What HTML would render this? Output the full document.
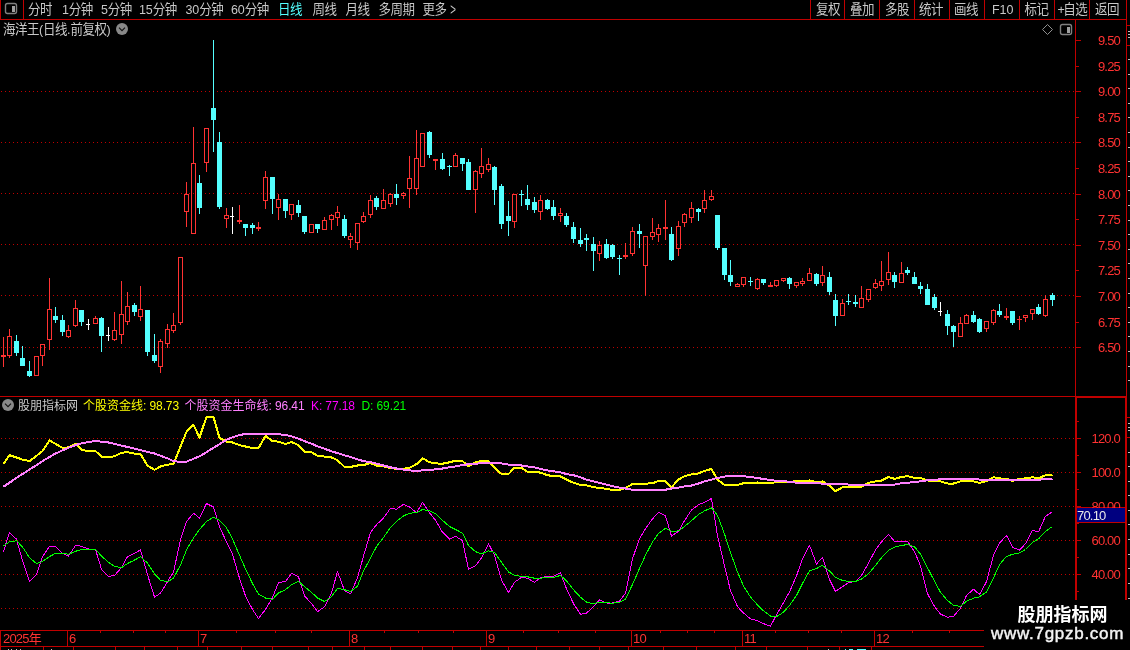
<!DOCTYPE html>
<html lang="zh-CN"><head><meta charset="utf-8"><title>海洋王 日线</title>
<style>
html,body{margin:0;padding:0;background:#000;}
body{width:1130px;height:650px;overflow:hidden;position:relative;}
svg{position:absolute;left:0;top:0;display:block;will-change:transform;}
text{font-family:"Liberation Sans","Noto Sans CJK SC",sans-serif;fill:#c8c8c8;}
.tb{font-size:12.5px;letter-spacing:-0.5px;}
.tl{font-size:12px;letter-spacing:0px;}
.la{letter-spacing:-0.1px;}
.tl .la{letter-spacing:-0.1px;}
.cy{fill:#54ffff;}
.ax{font-size:13px;fill:#ff3232;letter-spacing:-0.8px;}
.wm1{font-size:18px;font-weight:bold;fill:#fff;letter-spacing:0px;}
.wm2{font-size:17px;font-weight:normal;fill:#f4f4f4;stroke:#f4f4f4;stroke-width:0.45px;letter-spacing:0.72px;}
</style></head><body>
<svg width="1130" height="650" viewBox="0 0 1130 650" shape-rendering="crispEdges">
<rect x="0" y="0" width="1130" height="650" fill="#000"/>
<line x1="1" y1="91.5" x2="1075" y2="91.5" stroke="#c00000" stroke-width="1" stroke-dasharray="1 3"/>
<line x1="1" y1="142.5" x2="1075" y2="142.5" stroke="#c00000" stroke-width="1" stroke-dasharray="1 3"/>
<line x1="1" y1="193.5" x2="1075" y2="193.5" stroke="#c00000" stroke-width="1" stroke-dasharray="1 3"/>
<line x1="1" y1="244.5" x2="1075" y2="244.5" stroke="#c00000" stroke-width="1" stroke-dasharray="1 3"/>
<line x1="1" y1="295.5" x2="1075" y2="295.5" stroke="#c00000" stroke-width="1" stroke-dasharray="1 3"/>
<line x1="1" y1="347.5" x2="1075" y2="347.5" stroke="#c00000" stroke-width="1" stroke-dasharray="1 3"/>
<line x1="1" y1="438.5" x2="1075" y2="438.5" stroke="#c00000" stroke-width="1" stroke-dasharray="1 3"/>
<line x1="1" y1="472.5" x2="1075" y2="472.5" stroke="#c00000" stroke-width="1" stroke-dasharray="1 3"/>
<line x1="1" y1="506.5" x2="1075" y2="506.5" stroke="#c00000" stroke-width="1" stroke-dasharray="1 3"/>
<line x1="1" y1="540.5" x2="1075" y2="540.5" stroke="#c00000" stroke-width="1" stroke-dasharray="1 3"/>
<line x1="1" y1="574.5" x2="1075" y2="574.5" stroke="#c00000" stroke-width="1" stroke-dasharray="1 3"/>
<line x1="1" y1="608.5" x2="1075" y2="608.5" stroke="#c00000" stroke-width="1" stroke-dasharray="1 3"/>
<rect x="0" y="19" width="1127" height="1" fill="#c00000"/>
<rect x="0" y="0" width="1" height="20" fill="#c00000"/>
<rect x="23" y="0" width="1" height="20" fill="#c00000"/>
<rect x="810" y="0" width="1" height="20" fill="#c00000"/>
<rect x="844" y="0" width="1" height="20" fill="#c00000"/>
<rect x="879" y="0" width="1" height="20" fill="#c00000"/>
<rect x="914" y="0" width="1" height="20" fill="#c00000"/>
<rect x="949" y="0" width="1" height="20" fill="#c00000"/>
<rect x="984" y="0" width="1" height="20" fill="#c00000"/>
<rect x="1019" y="0" width="1" height="20" fill="#c00000"/>
<rect x="1054" y="0" width="1" height="20" fill="#c00000"/>
<rect x="1089" y="0" width="1" height="20" fill="#c00000"/>
<rect x="1126" y="0" width="1" height="397" fill="#c00000"/>
<rect x="1075" y="20" width="1" height="377" fill="#c00000"/>
<rect x="0" y="396" width="1075" height="1" fill="#c00000"/>
<rect x="1075" y="396" width="52" height="2" fill="#c00000"/>
<rect x="1075" y="396" width="2" height="235" fill="#c00000"/>
<rect x="1125" y="396" width="2" height="254" fill="#c00000"/>
<rect x="0" y="630" width="985" height="1" fill="#c00000"/>
<rect x="0" y="646" width="985" height="1" fill="#c00000"/>
<rect x="0" y="630" width="1" height="20" fill="#c00000"/>
<rect x="8" y="649" width="1" height="1" fill="#c0c0c0"/>
<rect x="11" y="649" width="1" height="1" fill="#c0c0c0"/>
<rect x="16" y="649" width="1" height="1" fill="#c0c0c0"/>
<rect x="20" y="649" width="1" height="1" fill="#c0c0c0"/>
<rect x="51" y="649" width="1" height="1" fill="#c0c0c0"/>
<rect x="828" y="649" width="1" height="1" fill="#c0c0c0"/>
<rect x="845" y="649" width="1" height="1" fill="#54ffff"/>
<rect x="849" y="649" width="4" height="1" fill="#54ffff"/>
<rect x="857" y="649" width="9" height="1" fill="#54ffff"/>
<rect x="1127" y="25" width="3" height="1" fill="#c00000"/>
<rect x="1127" y="45" width="3" height="1" fill="#c00000"/>
<rect x="1127" y="417" width="3" height="1" fill="#c00000"/>
<rect x="1127" y="437" width="3" height="1" fill="#c00000"/>
<rect x="1128" y="31" width="2" height="1" fill="#c0c0c0"/>
<rect x="1128" y="34" width="2" height="1" fill="#c0c0c0"/>
<rect x="1128" y="37" width="2" height="1" fill="#c0c0c0"/>
<rect x="1128" y="59" width="2" height="1" fill="#c0c0c0"/>
<rect x="1128" y="74" width="2" height="1" fill="#c0c0c0"/>
<rect x="1128" y="88" width="2" height="1" fill="#c0c0c0"/>
<rect x="1128" y="103" width="2" height="1" fill="#c0c0c0"/>
<rect x="1128" y="117" width="2" height="1" fill="#c0c0c0"/>
<rect x="1128" y="132" width="2" height="1" fill="#c0c0c0"/>
<rect x="1128" y="147" width="2" height="1" fill="#c0c0c0"/>
<rect x="1128" y="161" width="2" height="1" fill="#c0c0c0"/>
<rect x="1128" y="176" width="2" height="1" fill="#c0c0c0"/>
<rect x="1128" y="190" width="2" height="1" fill="#c0c0c0"/>
<rect x="1128" y="205" width="2" height="1" fill="#c0c0c0"/>
<rect x="1128" y="220" width="2" height="1" fill="#c0c0c0"/>
<rect x="1128" y="234" width="2" height="1" fill="#c0c0c0"/>
<rect x="1128" y="249" width="2" height="1" fill="#c0c0c0"/>
<rect x="1128" y="263" width="2" height="1" fill="#c0c0c0"/>
<rect x="1128" y="278" width="2" height="1" fill="#c0c0c0"/>
<rect x="1128" y="293" width="2" height="1" fill="#c0c0c0"/>
<rect x="1128" y="307" width="2" height="1" fill="#c0c0c0"/>
<rect x="1128" y="322" width="2" height="1" fill="#c0c0c0"/>
<rect x="1128" y="336" width="2" height="1" fill="#c0c0c0"/>
<rect x="1128" y="351" width="2" height="1" fill="#c0c0c0"/>
<rect x="1128" y="366" width="2" height="1" fill="#c0c0c0"/>
<rect x="1128" y="380" width="2" height="1" fill="#c0c0c0"/>
<rect x="1128" y="423" width="2" height="1" fill="#c0c0c0"/>
<rect x="1128" y="427" width="2" height="1" fill="#c0c0c0"/>
<rect x="1128" y="430" width="2" height="1" fill="#c0c0c0"/>
<rect x="1128" y="452" width="2" height="1" fill="#c0c0c0"/>
<rect x="1128" y="466" width="2" height="1" fill="#c0c0c0"/>
<rect x="1128" y="481" width="2" height="1" fill="#c0c0c0"/>
<rect x="1128" y="495" width="2" height="1" fill="#c0c0c0"/>
<rect x="1128" y="510" width="2" height="1" fill="#c0c0c0"/>
<rect x="1128" y="524" width="2" height="1" fill="#c0c0c0"/>
<rect x="1128" y="539" width="2" height="1" fill="#c0c0c0"/>
<rect x="1128" y="554" width="2" height="1" fill="#c0c0c0"/>
<rect x="1128" y="568" width="2" height="1" fill="#c0c0c0"/>
<rect x="1128" y="583" width="2" height="1" fill="#c0c0c0"/>
<rect x="1128" y="598" width="2" height="1" fill="#c0c0c0"/>
<rect x="67" y="630" width="1" height="17" fill="#c00000"/>
<rect x="198" y="630" width="1" height="17" fill="#c00000"/>
<rect x="349" y="630" width="1" height="17" fill="#c00000"/>
<rect x="486" y="630" width="1" height="17" fill="#c00000"/>
<rect x="631" y="630" width="1" height="17" fill="#c00000"/>
<rect x="742" y="630" width="1" height="17" fill="#c00000"/>
<rect x="874" y="630" width="1" height="17" fill="#c00000"/>
<rect x="100" y="630" width="1" height="3" fill="#c00000"/>
<rect x="133" y="630" width="1" height="3" fill="#c00000"/>
<rect x="165" y="630" width="1" height="3" fill="#c00000"/>
<rect x="236" y="630" width="1" height="3" fill="#c00000"/>
<rect x="275" y="630" width="1" height="3" fill="#c00000"/>
<rect x="311" y="630" width="1" height="3" fill="#c00000"/>
<rect x="384" y="630" width="1" height="3" fill="#c00000"/>
<rect x="418" y="630" width="1" height="3" fill="#c00000"/>
<rect x="453" y="630" width="1" height="3" fill="#c00000"/>
<rect x="523" y="630" width="1" height="3" fill="#c00000"/>
<rect x="558" y="630" width="1" height="3" fill="#c00000"/>
<rect x="595" y="630" width="1" height="3" fill="#c00000"/>
<rect x="660" y="630" width="1" height="3" fill="#c00000"/>
<rect x="687" y="630" width="1" height="3" fill="#c00000"/>
<rect x="714" y="630" width="1" height="3" fill="#c00000"/>
<rect x="775" y="630" width="1" height="3" fill="#c00000"/>
<rect x="808" y="630" width="1" height="3" fill="#c00000"/>
<rect x="841" y="630" width="1" height="3" fill="#c00000"/>
<rect x="912" y="630" width="1" height="3" fill="#c00000"/>
<rect x="949" y="630" width="1" height="3" fill="#c00000"/>
<rect x="43" y="646" width="1" height="4" fill="#c00000"/>
<rect x="73" y="646" width="1" height="4" fill="#c00000"/>
<rect x="115" y="646" width="1" height="4" fill="#c00000"/>
<rect x="144" y="646" width="1" height="4" fill="#c00000"/>
<rect x="177" y="646" width="1" height="4" fill="#c00000"/>
<rect x="207" y="646" width="1" height="4" fill="#c00000"/>
<rect x="241" y="646" width="1" height="4" fill="#c00000"/>
<rect x="272" y="646" width="1" height="4" fill="#c00000"/>
<rect x="308" y="646" width="1" height="4" fill="#c00000"/>
<rect x="332" y="646" width="1" height="4" fill="#c00000"/>
<rect x="364" y="646" width="1" height="4" fill="#c00000"/>
<rect x="390" y="646" width="1" height="4" fill="#c00000"/>
<rect x="422" y="646" width="1" height="4" fill="#c00000"/>
<rect x="452" y="646" width="1" height="4" fill="#c00000"/>
<rect x="480" y="646" width="1" height="4" fill="#c00000"/>
<rect x="508" y="646" width="1" height="4" fill="#c00000"/>
<rect x="536" y="646" width="1" height="4" fill="#c00000"/>
<rect x="569" y="646" width="1" height="4" fill="#c00000"/>
<rect x="599" y="646" width="1" height="4" fill="#c00000"/>
<rect x="628" y="646" width="1" height="4" fill="#c00000"/>
<rect x="663" y="646" width="1" height="4" fill="#c00000"/>
<rect x="696" y="646" width="1" height="4" fill="#c00000"/>
<rect x="735" y="646" width="1" height="4" fill="#c00000"/>
<rect x="766" y="646" width="1" height="4" fill="#c00000"/>
<rect x="807" y="646" width="1" height="4" fill="#c00000"/>
<rect x="839" y="646" width="1" height="4" fill="#c00000"/>
<rect x="871" y="646" width="1" height="4" fill="#c00000"/>
<rect x="1076" y="40" width="5" height="1" fill="#c00000"/>
<rect x="1076" y="66" width="3" height="1" fill="#c00000"/>
<rect x="1076" y="91" width="5" height="1" fill="#c00000"/>
<rect x="1076" y="117" width="3" height="1" fill="#c00000"/>
<rect x="1076" y="142" width="5" height="1" fill="#c00000"/>
<rect x="1076" y="168" width="3" height="1" fill="#c00000"/>
<rect x="1076" y="194" width="5" height="1" fill="#c00000"/>
<rect x="1076" y="219" width="3" height="1" fill="#c00000"/>
<rect x="1076" y="245" width="5" height="1" fill="#c00000"/>
<rect x="1076" y="270" width="3" height="1" fill="#c00000"/>
<rect x="1076" y="296" width="5" height="1" fill="#c00000"/>
<rect x="1076" y="322" width="3" height="1" fill="#c00000"/>
<rect x="1076" y="347" width="5" height="1" fill="#c00000"/>
<rect x="1077" y="438" width="4" height="1" fill="#c00000"/>
<rect x="1077" y="472" width="4" height="1" fill="#c00000"/>
<rect x="1077" y="506" width="4" height="1" fill="#c00000"/>
<rect x="1077" y="540" width="4" height="1" fill="#c00000"/>
<rect x="1077" y="574" width="4" height="1" fill="#c00000"/>
<rect x="1077" y="421" width="2" height="1" fill="#c00000"/>
<rect x="1077" y="455" width="2" height="1" fill="#c00000"/>
<rect x="1077" y="489" width="2" height="1" fill="#c00000"/>
<rect x="1077" y="523" width="2" height="1" fill="#c00000"/>
<rect x="1077" y="557" width="2" height="1" fill="#c00000"/>
<rect x="1077" y="591" width="2" height="1" fill="#c00000"/>
<rect x="1077" y="608" width="2" height="1" fill="#c00000"/>
<rect x="1077" y="625" width="2" height="1" fill="#c00000"/>
<rect x="3" y="337" width="1" height="30" fill="#ff3232"/>
<rect x="1" y="355" width="5" height="2" fill="#ff3232"/>
<rect x="9" y="329" width="1" height="7" fill="#ff3232"/>
<rect x="9" y="356" width="1" height="2" fill="#ff3232"/>
<rect x="7.5" y="336.5" width="4" height="19" fill="none" stroke="#ff3232" stroke-width="1"/>
<rect x="16" y="335" width="1" height="21" fill="#54ffff"/>
<rect x="14" y="341" width="5" height="12" fill="#54ffff"/>
<rect x="22" y="346" width="1" height="20" fill="#54ffff"/>
<rect x="20" y="358" width="5" height="8" fill="#54ffff"/>
<rect x="29" y="361" width="1" height="16" fill="#54ffff"/>
<rect x="27" y="371" width="5" height="5" fill="#54ffff"/>
<rect x="34.5" y="356.5" width="4" height="19" fill="none" stroke="#ff3232" stroke-width="1"/>
<rect x="42" y="356" width="1" height="10" fill="#ff3232"/>
<rect x="40.5" y="344.5" width="4" height="11" fill="none" stroke="#ff3232" stroke-width="1"/>
<rect x="49" y="278" width="1" height="31" fill="#ff3232"/>
<rect x="49" y="340" width="1" height="10" fill="#ff3232"/>
<rect x="47.5" y="309.5" width="4" height="30" fill="none" stroke="#ff3232" stroke-width="1"/>
<rect x="55" y="307" width="1" height="16" fill="#54ffff"/>
<rect x="53" y="316" width="5" height="4" fill="#54ffff"/>
<rect x="62" y="315" width="1" height="21" fill="#54ffff"/>
<rect x="60" y="320" width="5" height="12" fill="#54ffff"/>
<rect x="68" y="325" width="1" height="5" fill="#ff3232"/>
<rect x="68" y="337" width="1" height="1" fill="#ff3232"/>
<rect x="66.5" y="330.5" width="4" height="6" fill="none" stroke="#ff3232" stroke-width="1"/>
<rect x="75" y="300" width="1" height="8" fill="#ff3232"/>
<rect x="75" y="326" width="1" height="1" fill="#ff3232"/>
<rect x="73.5" y="308.5" width="4" height="17" fill="none" stroke="#ff3232" stroke-width="1"/>
<rect x="81" y="310" width="1" height="16" fill="#54ffff"/>
<rect x="79" y="310" width="5" height="12" fill="#54ffff"/>
<rect x="88" y="319" width="1" height="11" fill="#ffffff"/>
<rect x="86" y="324" width="4" height="1" fill="#ffffff"/>
<rect x="95" y="316" width="1" height="2" fill="#ff3232"/>
<rect x="93.5" y="318.5" width="4" height="5" fill="none" stroke="#ff3232" stroke-width="1"/>
<rect x="101" y="317" width="1" height="35" fill="#54ffff"/>
<rect x="99" y="318" width="5" height="18" fill="#54ffff"/>
<rect x="108" y="327" width="1" height="14" fill="#ffffff"/>
<rect x="106" y="335" width="4" height="1" fill="#ffffff"/>
<rect x="114" y="312" width="1" height="18" fill="#ff3232"/>
<rect x="114" y="340" width="1" height="1" fill="#ff3232"/>
<rect x="112.5" y="330.5" width="4" height="9" fill="none" stroke="#ff3232" stroke-width="1"/>
<rect x="121" y="281" width="1" height="33" fill="#ff3232"/>
<rect x="121" y="335" width="1" height="9" fill="#ff3232"/>
<rect x="119.5" y="314.5" width="4" height="20" fill="none" stroke="#ff3232" stroke-width="1"/>
<rect x="127" y="292" width="1" height="14" fill="#ff3232"/>
<rect x="127" y="322" width="1" height="3" fill="#ff3232"/>
<rect x="125.5" y="306.5" width="4" height="15" fill="none" stroke="#ff3232" stroke-width="1"/>
<rect x="134" y="303" width="1" height="13" fill="#54ffff"/>
<rect x="132" y="305" width="5" height="7" fill="#54ffff"/>
<rect x="140" y="286" width="1" height="23" fill="#ff3232"/>
<rect x="140" y="317" width="1" height="4" fill="#ff3232"/>
<rect x="138.5" y="309.5" width="4" height="7" fill="none" stroke="#ff3232" stroke-width="1"/>
<rect x="147" y="310" width="1" height="46" fill="#54ffff"/>
<rect x="145" y="310" width="5" height="42" fill="#54ffff"/>
<rect x="154" y="334" width="1" height="29" fill="#54ffff"/>
<rect x="152" y="355" width="5" height="6" fill="#54ffff"/>
<rect x="160" y="339" width="1" height="2" fill="#ff3232"/>
<rect x="160" y="367" width="1" height="6" fill="#ff3232"/>
<rect x="158.5" y="341.5" width="4" height="25" fill="none" stroke="#ff3232" stroke-width="1"/>
<rect x="167" y="324" width="1" height="5" fill="#ff3232"/>
<rect x="167" y="344" width="1" height="4" fill="#ff3232"/>
<rect x="165.5" y="329.5" width="4" height="14" fill="none" stroke="#ff3232" stroke-width="1"/>
<rect x="173" y="313" width="1" height="12" fill="#ff3232"/>
<rect x="173" y="331" width="1" height="2" fill="#ff3232"/>
<rect x="171.5" y="325.5" width="4" height="5" fill="none" stroke="#ff3232" stroke-width="1"/>
<rect x="180" y="323" width="1" height="2" fill="#ff3232"/>
<rect x="178.5" y="257.5" width="4" height="65" fill="none" stroke="#ff3232" stroke-width="1"/>
<rect x="186" y="182" width="1" height="12" fill="#ff3232"/>
<rect x="186" y="212" width="1" height="15" fill="#ff3232"/>
<rect x="184.5" y="194.5" width="4" height="17" fill="none" stroke="#ff3232" stroke-width="1"/>
<rect x="193" y="127" width="1" height="36" fill="#ff3232"/>
<rect x="191.5" y="163.5" width="4" height="70" fill="none" stroke="#ff3232" stroke-width="1"/>
<rect x="199" y="175" width="1" height="39" fill="#54ffff"/>
<rect x="197" y="183" width="5" height="25" fill="#54ffff"/>
<rect x="206" y="163" width="1" height="9" fill="#ff3232"/>
<rect x="204.5" y="128.5" width="4" height="34" fill="none" stroke="#ff3232" stroke-width="1"/>
<rect x="213" y="40" width="1" height="112" fill="#54ffff"/>
<rect x="211" y="108" width="5" height="12" fill="#54ffff"/>
<rect x="219" y="132" width="1" height="77" fill="#54ffff"/>
<rect x="217" y="142" width="5" height="65" fill="#54ffff"/>
<rect x="226" y="208" width="1" height="7" fill="#ff3232"/>
<rect x="226" y="219" width="1" height="9" fill="#ff3232"/>
<rect x="224.5" y="215.5" width="4" height="3" fill="none" stroke="#ff3232" stroke-width="1"/>
<rect x="232" y="207" width="1" height="27" fill="#ffffff"/>
<rect x="230" y="216" width="4" height="1" fill="#ffffff"/>
<rect x="239" y="205" width="1" height="19" fill="#ff3232"/>
<rect x="237" y="220" width="5" height="2" fill="#ff3232"/>
<rect x="245" y="224" width="1" height="12" fill="#54ffff"/>
<rect x="243" y="224" width="5" height="4" fill="#54ffff"/>
<rect x="252" y="223" width="1" height="11" fill="#54ffff"/>
<rect x="250" y="225" width="5" height="3" fill="#54ffff"/>
<rect x="258" y="222" width="1" height="9" fill="#ff3232"/>
<rect x="256" y="227" width="5" height="2" fill="#ff3232"/>
<rect x="265" y="171" width="1" height="6" fill="#ff3232"/>
<rect x="265" y="201" width="1" height="8" fill="#ff3232"/>
<rect x="263.5" y="177.5" width="4" height="23" fill="none" stroke="#ff3232" stroke-width="1"/>
<rect x="272" y="177" width="1" height="37" fill="#54ffff"/>
<rect x="270" y="177" width="5" height="22" fill="#54ffff"/>
<rect x="278" y="194" width="1" height="5" fill="#ff3232"/>
<rect x="278" y="208" width="1" height="12" fill="#ff3232"/>
<rect x="276.5" y="199.5" width="4" height="8" fill="none" stroke="#ff3232" stroke-width="1"/>
<rect x="285" y="199" width="1" height="19" fill="#54ffff"/>
<rect x="283" y="199" width="5" height="12" fill="#54ffff"/>
<rect x="291" y="215" width="1" height="5" fill="#ff3232"/>
<rect x="289.5" y="204.5" width="4" height="10" fill="none" stroke="#ff3232" stroke-width="1"/>
<rect x="298" y="200" width="1" height="17" fill="#54ffff"/>
<rect x="296" y="205" width="5" height="8" fill="#54ffff"/>
<rect x="304" y="216" width="1" height="18" fill="#54ffff"/>
<rect x="302" y="216" width="5" height="16" fill="#54ffff"/>
<rect x="309.5" y="224.5" width="4" height="8" fill="none" stroke="#ff3232" stroke-width="1"/>
<rect x="317" y="224" width="1" height="9" fill="#54ffff"/>
<rect x="315" y="224" width="5" height="5" fill="#54ffff"/>
<rect x="324" y="217" width="1" height="3" fill="#ff3232"/>
<rect x="322.5" y="220.5" width="4" height="9" fill="none" stroke="#ff3232" stroke-width="1"/>
<rect x="331" y="214" width="1" height="1" fill="#ff3232"/>
<rect x="331" y="220" width="1" height="10" fill="#ff3232"/>
<rect x="329.5" y="215.5" width="4" height="4" fill="none" stroke="#ff3232" stroke-width="1"/>
<rect x="337" y="206" width="1" height="6" fill="#ff3232"/>
<rect x="337" y="218" width="1" height="8" fill="#ff3232"/>
<rect x="335.5" y="212.5" width="4" height="5" fill="none" stroke="#ff3232" stroke-width="1"/>
<rect x="344" y="215" width="1" height="23" fill="#54ffff"/>
<rect x="342" y="219" width="5" height="17" fill="#54ffff"/>
<rect x="350" y="233" width="1" height="3" fill="#ff3232"/>
<rect x="350" y="240" width="1" height="8" fill="#ff3232"/>
<rect x="348.5" y="236.5" width="4" height="3" fill="none" stroke="#ff3232" stroke-width="1"/>
<rect x="357" y="243" width="1" height="7" fill="#ff3232"/>
<rect x="355.5" y="223.5" width="4" height="19" fill="none" stroke="#ff3232" stroke-width="1"/>
<rect x="363" y="212" width="1" height="4" fill="#ff3232"/>
<rect x="363" y="222" width="1" height="1" fill="#ff3232"/>
<rect x="361.5" y="216.5" width="4" height="5" fill="none" stroke="#ff3232" stroke-width="1"/>
<rect x="370" y="195" width="1" height="5" fill="#ff3232"/>
<rect x="370" y="215" width="1" height="3" fill="#ff3232"/>
<rect x="368.5" y="200.5" width="4" height="14" fill="none" stroke="#ff3232" stroke-width="1"/>
<rect x="376" y="196" width="1" height="14" fill="#54ffff"/>
<rect x="374" y="198" width="5" height="9" fill="#54ffff"/>
<rect x="383" y="189" width="1" height="11" fill="#ff3232"/>
<rect x="381.5" y="200.5" width="4" height="8" fill="none" stroke="#ff3232" stroke-width="1"/>
<rect x="390" y="193" width="1" height="1" fill="#ff3232"/>
<rect x="390" y="204" width="1" height="3" fill="#ff3232"/>
<rect x="388.5" y="194.5" width="4" height="9" fill="none" stroke="#ff3232" stroke-width="1"/>
<rect x="396" y="184" width="1" height="21" fill="#54ffff"/>
<rect x="394" y="194" width="5" height="4" fill="#54ffff"/>
<rect x="403" y="192" width="1" height="1" fill="#ff3232"/>
<rect x="403" y="196" width="1" height="3" fill="#ff3232"/>
<rect x="401.5" y="193.5" width="4" height="2" fill="none" stroke="#ff3232" stroke-width="1"/>
<rect x="409" y="156" width="1" height="22" fill="#ff3232"/>
<rect x="409" y="189" width="1" height="19" fill="#ff3232"/>
<rect x="407.5" y="178.5" width="4" height="10" fill="none" stroke="#ff3232" stroke-width="1"/>
<rect x="416" y="130" width="1" height="28" fill="#ff3232"/>
<rect x="416" y="189" width="1" height="6" fill="#ff3232"/>
<rect x="414.5" y="158.5" width="4" height="30" fill="none" stroke="#ff3232" stroke-width="1"/>
<rect x="420.5" y="133.5" width="4" height="33" fill="none" stroke="#ff3232" stroke-width="1"/>
<rect x="429" y="131" width="1" height="27" fill="#54ffff"/>
<rect x="427" y="132" width="5" height="23" fill="#54ffff"/>
<rect x="435" y="159" width="1" height="11" fill="#ff3232"/>
<rect x="433" y="159" width="5" height="2" fill="#ff3232"/>
<rect x="442" y="153" width="1" height="17" fill="#54ffff"/>
<rect x="440" y="159" width="5" height="10" fill="#54ffff"/>
<rect x="449" y="165" width="1" height="11" fill="#54ffff"/>
<rect x="447" y="166" width="5" height="1" fill="#54ffff"/>
<rect x="455" y="153" width="1" height="2" fill="#ff3232"/>
<rect x="453.5" y="155.5" width="4" height="11" fill="none" stroke="#ff3232" stroke-width="1"/>
<rect x="462" y="158" width="1" height="13" fill="#54ffff"/>
<rect x="460" y="158" width="5" height="6" fill="#54ffff"/>
<rect x="468" y="159" width="1" height="31" fill="#54ffff"/>
<rect x="466" y="162" width="5" height="28" fill="#54ffff"/>
<rect x="475" y="170" width="1" height="1" fill="#ff3232"/>
<rect x="475" y="190" width="1" height="23" fill="#ff3232"/>
<rect x="473.5" y="171.5" width="4" height="18" fill="none" stroke="#ff3232" stroke-width="1"/>
<rect x="481" y="148" width="1" height="18" fill="#ff3232"/>
<rect x="481" y="174" width="1" height="4" fill="#ff3232"/>
<rect x="479.5" y="166.5" width="4" height="7" fill="none" stroke="#ff3232" stroke-width="1"/>
<rect x="488" y="158" width="1" height="6" fill="#ff3232"/>
<rect x="488" y="170" width="1" height="2" fill="#ff3232"/>
<rect x="486.5" y="164.5" width="4" height="5" fill="none" stroke="#ff3232" stroke-width="1"/>
<rect x="494" y="166" width="1" height="39" fill="#54ffff"/>
<rect x="492" y="167" width="5" height="23" fill="#54ffff"/>
<rect x="501" y="184" width="1" height="45" fill="#54ffff"/>
<rect x="499" y="186" width="5" height="38" fill="#54ffff"/>
<rect x="508" y="201" width="1" height="35" fill="#54ffff"/>
<rect x="506" y="216" width="5" height="5" fill="#54ffff"/>
<rect x="514" y="222" width="1" height="6" fill="#ff3232"/>
<rect x="512.5" y="194.5" width="4" height="27" fill="none" stroke="#ff3232" stroke-width="1"/>
<rect x="521" y="190" width="1" height="16" fill="#54ffff"/>
<rect x="519" y="194" width="5" height="1" fill="#54ffff"/>
<rect x="527" y="185" width="1" height="25" fill="#54ffff"/>
<rect x="525" y="199" width="5" height="6" fill="#54ffff"/>
<rect x="534" y="197" width="1" height="16" fill="#54ffff"/>
<rect x="532" y="202" width="5" height="8" fill="#54ffff"/>
<rect x="540" y="195" width="1" height="5" fill="#ff3232"/>
<rect x="540" y="212" width="1" height="8" fill="#ff3232"/>
<rect x="538.5" y="200.5" width="4" height="11" fill="none" stroke="#ff3232" stroke-width="1"/>
<rect x="547" y="199" width="1" height="11" fill="#54ffff"/>
<rect x="545" y="200" width="5" height="9" fill="#54ffff"/>
<rect x="553" y="200" width="1" height="20" fill="#54ffff"/>
<rect x="551" y="207" width="5" height="9" fill="#54ffff"/>
<rect x="560" y="208" width="1" height="5" fill="#ff3232"/>
<rect x="560" y="216" width="1" height="6" fill="#ff3232"/>
<rect x="558.5" y="213.5" width="4" height="2" fill="none" stroke="#ff3232" stroke-width="1"/>
<rect x="566" y="213" width="1" height="14" fill="#54ffff"/>
<rect x="564" y="216" width="5" height="9" fill="#54ffff"/>
<rect x="573" y="222" width="1" height="21" fill="#54ffff"/>
<rect x="571" y="227" width="5" height="12" fill="#54ffff"/>
<rect x="580" y="228" width="1" height="19" fill="#54ffff"/>
<rect x="578" y="240" width="5" height="4" fill="#54ffff"/>
<rect x="586" y="234" width="1" height="17" fill="#54ffff"/>
<rect x="584" y="238" width="5" height="2" fill="#54ffff"/>
<rect x="593" y="237" width="1" height="34" fill="#54ffff"/>
<rect x="591" y="244" width="5" height="7" fill="#54ffff"/>
<rect x="599" y="241" width="1" height="4" fill="#ff3232"/>
<rect x="599" y="254" width="1" height="7" fill="#ff3232"/>
<rect x="597.5" y="245.5" width="4" height="8" fill="none" stroke="#ff3232" stroke-width="1"/>
<rect x="606" y="239" width="1" height="20" fill="#54ffff"/>
<rect x="604" y="244" width="5" height="14" fill="#54ffff"/>
<rect x="612" y="244" width="1" height="15" fill="#54ffff"/>
<rect x="610" y="245" width="5" height="12" fill="#54ffff"/>
<rect x="619" y="255" width="1" height="20" fill="#54ffff"/>
<rect x="617" y="258" width="5" height="1" fill="#54ffff"/>
<rect x="625" y="243" width="1" height="16" fill="#ff3232"/>
<rect x="623" y="255" width="5" height="2" fill="#ff3232"/>
<rect x="632" y="227" width="1" height="4" fill="#ff3232"/>
<rect x="632" y="254" width="1" height="2" fill="#ff3232"/>
<rect x="630.5" y="231.5" width="4" height="22" fill="none" stroke="#ff3232" stroke-width="1"/>
<rect x="639" y="224" width="1" height="24" fill="#54ffff"/>
<rect x="637" y="231" width="5" height="3" fill="#54ffff"/>
<rect x="645" y="266" width="1" height="30" fill="#ff3232"/>
<rect x="643.5" y="236.5" width="4" height="29" fill="none" stroke="#ff3232" stroke-width="1"/>
<rect x="652" y="218" width="1" height="14" fill="#ff3232"/>
<rect x="652" y="237" width="1" height="3" fill="#ff3232"/>
<rect x="650.5" y="232.5" width="4" height="4" fill="none" stroke="#ff3232" stroke-width="1"/>
<rect x="658" y="224" width="1" height="4" fill="#ff3232"/>
<rect x="658" y="235" width="1" height="7" fill="#ff3232"/>
<rect x="656.5" y="228.5" width="4" height="6" fill="none" stroke="#ff3232" stroke-width="1"/>
<rect x="665" y="200" width="1" height="40" fill="#ff3232"/>
<rect x="663" y="227" width="5" height="2" fill="#ff3232"/>
<rect x="671" y="227" width="1" height="34" fill="#54ffff"/>
<rect x="669" y="234" width="5" height="26" fill="#54ffff"/>
<rect x="678" y="221" width="1" height="5" fill="#ff3232"/>
<rect x="678" y="249" width="1" height="7" fill="#ff3232"/>
<rect x="676.5" y="226.5" width="4" height="22" fill="none" stroke="#ff3232" stroke-width="1"/>
<rect x="684" y="213" width="1" height="1" fill="#ff3232"/>
<rect x="684" y="223" width="1" height="4" fill="#ff3232"/>
<rect x="682.5" y="214.5" width="4" height="8" fill="none" stroke="#ff3232" stroke-width="1"/>
<rect x="691" y="202" width="1" height="6" fill="#ff3232"/>
<rect x="691" y="218" width="1" height="5" fill="#ff3232"/>
<rect x="689.5" y="208.5" width="4" height="9" fill="none" stroke="#ff3232" stroke-width="1"/>
<rect x="698" y="208" width="1" height="13" fill="#54ffff"/>
<rect x="696" y="209" width="5" height="3" fill="#54ffff"/>
<rect x="704" y="190" width="1" height="10" fill="#ff3232"/>
<rect x="704" y="209" width="1" height="4" fill="#ff3232"/>
<rect x="702.5" y="200.5" width="4" height="8" fill="none" stroke="#ff3232" stroke-width="1"/>
<rect x="711" y="190" width="1" height="6" fill="#ff3232"/>
<rect x="711" y="200" width="1" height="1" fill="#ff3232"/>
<rect x="709.5" y="196.5" width="4" height="3" fill="none" stroke="#ff3232" stroke-width="1"/>
<rect x="717" y="215" width="1" height="35" fill="#54ffff"/>
<rect x="715" y="215" width="5" height="33" fill="#54ffff"/>
<rect x="724" y="248" width="1" height="32" fill="#54ffff"/>
<rect x="722" y="248" width="5" height="27" fill="#54ffff"/>
<rect x="730" y="260" width="1" height="26" fill="#54ffff"/>
<rect x="728" y="275" width="5" height="7" fill="#54ffff"/>
<rect x="737" y="283" width="1" height="1" fill="#ff3232"/>
<rect x="735.5" y="284.5" width="4" height="2" fill="none" stroke="#ff3232" stroke-width="1"/>
<rect x="743" y="285" width="1" height="2" fill="#ff3232"/>
<rect x="741.5" y="277.5" width="4" height="7" fill="none" stroke="#ff3232" stroke-width="1"/>
<rect x="750" y="277" width="1" height="9" fill="#54ffff"/>
<rect x="748" y="281" width="5" height="1" fill="#54ffff"/>
<rect x="757" y="278" width="1" height="1" fill="#ff3232"/>
<rect x="757" y="289" width="1" height="1" fill="#ff3232"/>
<rect x="755.5" y="279.5" width="4" height="9" fill="none" stroke="#ff3232" stroke-width="1"/>
<rect x="763" y="279" width="1" height="6" fill="#54ffff"/>
<rect x="761" y="279" width="5" height="4" fill="#54ffff"/>
<rect x="770" y="282" width="1" height="5" fill="#ff3232"/>
<rect x="768" y="285" width="5" height="2" fill="#ff3232"/>
<rect x="776" y="286" width="1" height="1" fill="#ff3232"/>
<rect x="774.5" y="280.5" width="4" height="5" fill="none" stroke="#ff3232" stroke-width="1"/>
<rect x="783" y="281" width="1" height="1" fill="#ff3232"/>
<rect x="781.5" y="278.5" width="4" height="2" fill="none" stroke="#ff3232" stroke-width="1"/>
<rect x="789" y="277" width="1" height="12" fill="#54ffff"/>
<rect x="787" y="278" width="5" height="6" fill="#54ffff"/>
<rect x="796" y="286" width="1" height="2" fill="#ff3232"/>
<rect x="794.5" y="282.5" width="4" height="3" fill="none" stroke="#ff3232" stroke-width="1"/>
<rect x="802" y="278" width="1" height="3" fill="#ff3232"/>
<rect x="802" y="284" width="1" height="2" fill="#ff3232"/>
<rect x="800.5" y="281.5" width="4" height="2" fill="none" stroke="#ff3232" stroke-width="1"/>
<rect x="809" y="268" width="1" height="5" fill="#ff3232"/>
<rect x="807.5" y="273.5" width="4" height="7" fill="none" stroke="#ff3232" stroke-width="1"/>
<rect x="816" y="273" width="1" height="13" fill="#54ffff"/>
<rect x="814" y="274" width="5" height="10" fill="#54ffff"/>
<rect x="822" y="266" width="1" height="9" fill="#ff3232"/>
<rect x="822" y="283" width="1" height="3" fill="#ff3232"/>
<rect x="820.5" y="275.5" width="4" height="7" fill="none" stroke="#ff3232" stroke-width="1"/>
<rect x="829" y="272" width="1" height="23" fill="#54ffff"/>
<rect x="827" y="277" width="5" height="15" fill="#54ffff"/>
<rect x="835" y="294" width="1" height="32" fill="#54ffff"/>
<rect x="833" y="300" width="5" height="16" fill="#54ffff"/>
<rect x="842" y="299" width="1" height="4" fill="#ff3232"/>
<rect x="840.5" y="303.5" width="4" height="12" fill="none" stroke="#ff3232" stroke-width="1"/>
<rect x="848" y="294" width="1" height="11" fill="#54ffff"/>
<rect x="846" y="301" width="5" height="1" fill="#54ffff"/>
<rect x="855" y="295" width="1" height="12" fill="#54ffff"/>
<rect x="853" y="302" width="5" height="2" fill="#54ffff"/>
<rect x="861" y="286" width="1" height="12" fill="#ff3232"/>
<rect x="859.5" y="298.5" width="4" height="9" fill="none" stroke="#ff3232" stroke-width="1"/>
<rect x="868" y="300" width="1" height="2" fill="#ff3232"/>
<rect x="866.5" y="289.5" width="4" height="10" fill="none" stroke="#ff3232" stroke-width="1"/>
<rect x="875" y="279" width="1" height="4" fill="#ff3232"/>
<rect x="875" y="288" width="1" height="1" fill="#ff3232"/>
<rect x="873.5" y="283.5" width="4" height="4" fill="none" stroke="#ff3232" stroke-width="1"/>
<rect x="881" y="261" width="1" height="20" fill="#ff3232"/>
<rect x="881" y="286" width="1" height="5" fill="#ff3232"/>
<rect x="879.5" y="281.5" width="4" height="4" fill="none" stroke="#ff3232" stroke-width="1"/>
<rect x="888" y="252" width="1" height="20" fill="#ff3232"/>
<rect x="888" y="280" width="1" height="5" fill="#ff3232"/>
<rect x="886.5" y="272.5" width="4" height="7" fill="none" stroke="#ff3232" stroke-width="1"/>
<rect x="894" y="272" width="1" height="16" fill="#54ffff"/>
<rect x="892" y="275" width="5" height="7" fill="#54ffff"/>
<rect x="901" y="262" width="1" height="11" fill="#ff3232"/>
<rect x="899.5" y="273.5" width="4" height="9" fill="none" stroke="#ff3232" stroke-width="1"/>
<rect x="907" y="267" width="1" height="8" fill="#54ffff"/>
<rect x="905" y="270" width="5" height="3" fill="#54ffff"/>
<rect x="914" y="272" width="1" height="12" fill="#54ffff"/>
<rect x="912" y="277" width="5" height="7" fill="#54ffff"/>
<rect x="920" y="282" width="1" height="12" fill="#54ffff"/>
<rect x="918" y="286" width="5" height="3" fill="#54ffff"/>
<rect x="927" y="284" width="1" height="21" fill="#54ffff"/>
<rect x="925" y="289" width="5" height="16" fill="#54ffff"/>
<rect x="934" y="294" width="1" height="16" fill="#54ffff"/>
<rect x="932" y="297" width="5" height="11" fill="#54ffff"/>
<rect x="940" y="302" width="1" height="14" fill="#ffffff"/>
<rect x="938" y="311" width="4" height="1" fill="#ffffff"/>
<rect x="947" y="310" width="1" height="25" fill="#54ffff"/>
<rect x="945" y="314" width="5" height="12" fill="#54ffff"/>
<rect x="953" y="325" width="1" height="22" fill="#54ffff"/>
<rect x="951" y="326" width="5" height="6" fill="#54ffff"/>
<rect x="960" y="317" width="1" height="6" fill="#ff3232"/>
<rect x="958.5" y="323.5" width="4" height="13" fill="none" stroke="#ff3232" stroke-width="1"/>
<rect x="966" y="314" width="1" height="1" fill="#ff3232"/>
<rect x="964.5" y="315.5" width="4" height="8" fill="none" stroke="#ff3232" stroke-width="1"/>
<rect x="973" y="311" width="1" height="12" fill="#54ffff"/>
<rect x="971" y="315" width="5" height="7" fill="#54ffff"/>
<rect x="979" y="318" width="1" height="15" fill="#54ffff"/>
<rect x="977" y="319" width="5" height="13" fill="#54ffff"/>
<rect x="986" y="329" width="1" height="3" fill="#ff3232"/>
<rect x="984.5" y="321.5" width="4" height="7" fill="none" stroke="#ff3232" stroke-width="1"/>
<rect x="993" y="309" width="1" height="1" fill="#ff3232"/>
<rect x="993" y="323" width="1" height="2" fill="#ff3232"/>
<rect x="991.5" y="310.5" width="4" height="12" fill="none" stroke="#ff3232" stroke-width="1"/>
<rect x="999" y="304" width="1" height="13" fill="#54ffff"/>
<rect x="997" y="311" width="5" height="4" fill="#54ffff"/>
<rect x="1006" y="308" width="1" height="12" fill="#ff3232"/>
<rect x="1004" y="316" width="5" height="2" fill="#ff3232"/>
<rect x="1012" y="311" width="1" height="14" fill="#54ffff"/>
<rect x="1010" y="311" width="5" height="12" fill="#54ffff"/>
<rect x="1019" y="316" width="1" height="3" fill="#ff3232"/>
<rect x="1019" y="320" width="1" height="10" fill="#ff3232"/>
<rect x="1017" y="319" width="5" height="1" fill="#ff3232"/>
<rect x="1025" y="318" width="1" height="4" fill="#ff3232"/>
<rect x="1023.5" y="315.5" width="4" height="2" fill="none" stroke="#ff3232" stroke-width="1"/>
<rect x="1032" y="314" width="1" height="6" fill="#ff3232"/>
<rect x="1030.5" y="309.5" width="4" height="4" fill="none" stroke="#ff3232" stroke-width="1"/>
<rect x="1038" y="304" width="1" height="11" fill="#54ffff"/>
<rect x="1036" y="307" width="5" height="7" fill="#54ffff"/>
<rect x="1045" y="295" width="1" height="4" fill="#ff3232"/>
<rect x="1045" y="316" width="1" height="1" fill="#ff3232"/>
<rect x="1043.5" y="299.5" width="4" height="16" fill="none" stroke="#ff3232" stroke-width="1"/>
<rect x="1052" y="293" width="1" height="13" fill="#54ffff"/>
<rect x="1050" y="295" width="5" height="5" fill="#54ffff"/>
<polyline points="3.5,464.1 9.5,455.2 16.5,457.5 22.5,459.6 29.5,461.1 36.5,455.8 42.5,451.0 49.5,440.4 55.5,443.9 62.5,447.8 68.5,447.4 75.5,443.9 81.5,449.9 88.5,451.0 95.5,451.0 101.5,456.6 108.5,457.0 114.5,456.3 121.5,452.7 127.5,452.2 134.5,453.6 140.5,454.0 147.5,465.5 154.5,469.9 160.5,466.4 167.5,464.6 173.5,464.2 180.5,446.5 186.5,431.9 193.5,424.8 199.5,437.5 206.5,416.8 213.5,416.8 219.5,438.1 226.5,441.6 232.5,442.5 239.5,445.1 245.5,446.5 252.5,448.1 258.5,448.1 265.5,435.9 272.5,441.1 278.5,441.6 285.5,443.9 291.5,442.1 298.5,445.1 304.5,451.9 311.5,452.2 317.5,455.8 324.5,456.6 331.5,457.5 337.5,460.2 344.5,466.9 350.5,466.9 357.5,465.5 363.5,465.1 370.5,463.0 376.5,465.5 383.5,466.4 390.5,468.1 396.5,468.7 403.5,468.7 409.5,467.8 416.5,464.1 422.5,458.1 429.5,462.3 435.5,463.4 442.5,463.7 449.5,462.3 455.5,460.7 462.5,461.1 468.5,466.4 475.5,462.3 481.5,461.1 488.5,461.1 494.5,467.6 501.5,474.0 508.5,474.0 514.5,467.8 521.5,467.8 527.5,471.7 534.5,472.0 540.5,472.6 547.5,475.2 553.5,476.1 560.5,476.5 566.5,479.6 573.5,482.8 580.5,485.0 586.5,485.3 593.5,487.1 599.5,488.0 606.5,488.8 612.5,489.9 619.5,489.9 625.5,488.0 632.5,484.1 639.5,483.7 645.5,483.7 652.5,483.2 658.5,481.1 665.5,481.1 671.5,487.3 678.5,479.6 684.5,476.1 691.5,474.3 698.5,473.5 704.5,470.8 711.5,469.0 717.5,479.6 724.5,485.0 730.5,485.0 737.5,485.0 743.5,483.2 750.5,483.5 757.5,482.5 763.5,482.8 770.5,482.8 776.5,482.3 783.5,481.9 789.5,481.9 796.5,481.1 802.5,481.1 809.5,480.5 816.5,482.3 822.5,481.4 829.5,485.8 835.5,491.2 842.5,487.3 848.5,486.7 855.5,486.7 861.5,486.7 868.5,482.8 875.5,481.4 881.5,480.5 888.5,477.0 894.5,478.8 901.5,477.0 907.5,476.1 914.5,477.9 920.5,477.9 927.5,480.5 934.5,480.5 940.5,481.4 947.5,483.5 953.5,483.5 960.5,481.4 966.5,480.5 973.5,481.4 979.5,482.8 986.5,481.1 993.5,477.3 999.5,478.4 1006.5,478.8 1012.5,481.1 1019.5,478.8 1025.5,478.4 1032.5,477.3 1038.5,478.4 1045.5,475.2 1052.5,474.9" fill="none" stroke="#ffff00" stroke-width="2" stroke-linejoin="round"/>
<polyline points="3.5,486.7 9.5,482.7 16.5,477.9 22.5,474.0 29.5,469.6 36.5,465.1 42.5,461.1 49.5,457.0 55.5,453.5 62.5,450.4 68.5,447.8 75.5,445.1 81.5,443.4 88.5,441.9 95.5,441.1 101.5,441.6 108.5,442.5 114.5,443.9 121.5,445.7 127.5,446.9 134.5,448.7 140.5,450.1 147.5,451.9 154.5,453.5 160.5,455.8 167.5,458.4 173.5,461.1 180.5,461.9 186.5,461.6 193.5,458.8 199.5,456.3 206.5,452.2 213.5,447.8 219.5,444.2 226.5,439.8 232.5,437.2 239.5,435.0 245.5,434.0 252.5,433.6 258.5,433.6 265.5,433.6 272.5,433.6 278.5,434.2 285.5,435.0 291.5,436.3 298.5,438.6 304.5,441.1 311.5,443.7 317.5,446.4 324.5,448.7 331.5,451.3 337.5,453.1 344.5,455.4 350.5,457.0 357.5,459.3 363.5,461.1 370.5,462.2 376.5,463.7 383.5,465.5 390.5,467.3 396.5,468.5 403.5,469.6 409.5,470.4 416.5,470.8 422.5,470.4 429.5,469.9 435.5,469.4 442.5,468.5 449.5,467.3 455.5,466.4 462.5,465.1 468.5,464.2 475.5,463.7 481.5,463.2 488.5,462.8 494.5,462.8 501.5,463.4 508.5,464.6 514.5,465.0 521.5,465.5 527.5,466.4 534.5,467.3 540.5,469.0 547.5,470.4 553.5,471.3 560.5,472.3 566.5,474.1 573.5,475.2 580.5,477.3 586.5,479.6 593.5,481.4 599.5,482.8 606.5,484.6 612.5,486.2 619.5,487.6 625.5,488.5 632.5,489.7 639.5,489.9 645.5,489.9 652.5,489.9 658.5,489.9 665.5,489.7 671.5,488.5 678.5,487.6 684.5,486.4 691.5,485.5 698.5,483.5 704.5,481.4 711.5,479.6 717.5,477.9 724.5,476.6 730.5,475.8 737.5,475.8 743.5,476.1 750.5,477.1 757.5,477.9 763.5,479.1 770.5,480.0 776.5,480.9 783.5,481.1 789.5,481.8 796.5,482.7 802.5,482.8 809.5,482.8 816.5,482.8 822.5,483.7 829.5,483.7 835.5,483.7 842.5,483.7 848.5,484.6 855.5,485.0 861.5,485.0 868.5,485.0 875.5,485.0 881.5,485.0 888.5,485.0 894.5,484.6 901.5,483.2 907.5,482.8 914.5,481.9 920.5,481.4 927.5,480.2 934.5,480.0 940.5,479.1 947.5,478.8 953.5,478.8 960.5,478.8 966.5,478.8 973.5,478.8 979.5,479.6 986.5,479.6 993.5,479.6 999.5,479.6 1006.5,479.6 1012.5,479.6 1019.5,479.6 1025.5,479.6 1032.5,479.6 1038.5,479.6 1045.5,479.3 1052.5,478.8" fill="none" stroke="#ff80ff" stroke-width="2" stroke-linejoin="round"/>
<polyline points="3.5,551.6 9.5,532.5 16.5,539.2 22.5,560.5 29.5,581.2 36.5,574.6 42.5,556.9 49.5,546.3 55.5,546.3 62.5,553.4 68.5,556.1 75.5,545.4 81.5,546.3 88.5,549.0 95.5,549.5 101.5,569.3 108.5,576.4 114.5,575.5 121.5,567.6 127.5,556.6 134.5,553.4 140.5,549.9 147.5,574.6 154.5,597.1 160.5,593.2 167.5,581.7 173.5,572.0 180.5,540.0 186.5,521.5 193.5,513.2 199.5,518.0 206.5,503.5 213.5,507.0 219.5,526.9 226.5,541.9 232.5,554.3 239.5,578.2 245.5,595.9 252.5,609.5 258.5,618.4 265.5,609.5 272.5,597.7 278.5,582.6 285.5,581.4 291.5,573.4 298.5,576.9 304.5,595.9 311.5,603.5 317.5,611.6 324.5,606.9 331.5,593.2 337.5,571.5 344.5,590.6 350.5,593.8 357.5,577.8 363.5,556.1 370.5,532.5 376.5,524.7 383.5,518.0 390.5,508.3 396.5,509.2 403.5,504.2 409.5,507.0 416.5,512.7 422.5,502.4 429.5,512.7 435.5,520.3 442.5,532.2 449.5,539.2 455.5,536.2 462.5,540.7 468.5,569.3 475.5,565.8 481.5,557.8 488.5,543.7 494.5,555.2 501.5,580.0 508.5,592.3 514.5,582.3 521.5,577.3 527.5,578.2 534.5,582.3 540.5,577.8 547.5,576.4 553.5,576.4 560.5,572.9 566.5,588.8 573.5,603.6 580.5,614.3 586.5,613.0 593.5,606.7 599.5,599.8 606.5,603.0 612.5,603.0 619.5,601.2 625.5,593.2 632.5,558.7 639.5,538.9 645.5,528.6 652.5,518.9 658.5,512.3 665.5,515.9 671.5,536.2 678.5,531.3 684.5,520.7 691.5,510.0 698.5,504.7 704.5,502.4 711.5,498.5 717.5,535.7 724.5,565.8 730.5,590.6 737.5,606.7 743.5,613.0 750.5,618.8 757.5,620.7 763.5,623.6 770.5,626.2 776.5,614.8 783.5,602.6 789.5,591.9 796.5,575.9 802.5,558.7 809.5,545.4 816.5,564.0 822.5,557.3 829.5,579.6 835.5,591.5 842.5,586.7 848.5,582.6 855.5,581.4 861.5,575.5 868.5,563.1 875.5,549.9 881.5,541.9 888.5,534.3 894.5,541.4 901.5,541.4 907.5,541.4 914.5,551.6 920.5,565.8 927.5,593.6 934.5,606.5 940.5,614.1 947.5,617.3 953.5,616.3 960.5,608.3 966.5,595.5 973.5,589.2 979.5,594.5 986.5,581.7 993.5,555.2 999.5,543.1 1006.5,535.4 1012.5,547.2 1019.5,550.2 1025.5,543.7 1032.5,530.4 1038.5,531.8 1045.5,516.2 1052.5,511.8" fill="none" stroke="#ff00ff" stroke-width="1" stroke-linejoin="round"/>
<polyline points="3.5,545.8 9.5,541.9 16.5,540.7 22.5,546.9 29.5,557.8 36.5,563.5 42.5,561.4 49.5,556.6 55.5,553.4 62.5,553.4 68.5,554.3 75.5,551.3 81.5,549.5 88.5,549.3 95.5,549.3 101.5,556.1 108.5,562.3 114.5,566.3 121.5,567.6 127.5,563.5 134.5,560.1 140.5,556.6 147.5,563.1 154.5,573.8 160.5,580.3 167.5,581.7 173.5,578.2 180.5,564.9 186.5,549.9 193.5,538.0 199.5,529.5 206.5,521.5 213.5,517.1 219.5,520.3 226.5,527.7 232.5,538.9 239.5,555.2 245.5,569.0 252.5,583.5 258.5,594.1 265.5,598.0 272.5,599.4 278.5,592.9 285.5,589.7 291.5,584.7 298.5,581.4 304.5,586.7 311.5,592.3 317.5,598.0 324.5,601.5 331.5,596.8 337.5,588.3 344.5,589.7 350.5,591.5 357.5,586.2 363.5,571.1 370.5,558.0 376.5,546.6 383.5,537.5 390.5,527.4 396.5,521.2 403.5,515.9 409.5,513.2 416.5,512.7 422.5,509.5 429.5,510.9 435.5,513.6 442.5,520.3 449.5,526.5 455.5,529.5 462.5,533.1 468.5,545.4 475.5,551.6 481.5,553.9 488.5,550.8 494.5,552.5 501.5,562.3 508.5,572.0 514.5,575.2 521.5,576.4 527.5,576.8 534.5,578.2 540.5,578.2 547.5,577.3 553.5,577.3 560.5,575.5 566.5,580.8 573.5,589.7 580.5,597.3 586.5,602.1 593.5,603.8 599.5,602.1 606.5,602.6 612.5,603.3 619.5,602.1 625.5,599.1 632.5,584.4 639.5,568.5 645.5,555.2 652.5,541.9 658.5,533.6 665.5,528.3 671.5,531.3 678.5,530.9 684.5,526.5 691.5,520.7 698.5,514.5 704.5,510.9 711.5,507.7 717.5,515.4 724.5,533.9 730.5,552.5 737.5,572.0 743.5,586.0 750.5,597.0 757.5,605.0 763.5,610.8 770.5,616.1 776.5,616.7 783.5,612.2 789.5,605.5 796.5,595.5 802.5,583.5 809.5,570.8 816.5,568.5 822.5,565.4 829.5,571.1 835.5,577.3 842.5,580.5 848.5,581.4 855.5,581.4 861.5,579.1 868.5,573.8 875.5,565.4 881.5,557.8 888.5,550.2 894.5,547.2 901.5,545.4 907.5,544.6 914.5,546.7 920.5,554.3 927.5,567.7 934.5,581.2 940.5,592.3 947.5,600.5 953.5,605.3 960.5,606.4 966.5,601.2 973.5,598.2 979.5,596.8 986.5,592.0 993.5,577.8 999.5,564.6 1006.5,556.4 1012.5,554.3 1019.5,552.9 1025.5,549.5 1032.5,542.4 1038.5,538.9 1045.5,531.3 1052.5,526.5" fill="none" stroke="#00ff00" stroke-width="1" stroke-linejoin="round"/>
<rect x="984" y="600" width="146" height="50" fill="#000"/>
<rect x="1077" y="508" width="48" height="15" fill="#000080"/>
<rect x="1077" y="507" width="48" height="1" fill="#c00000"/>
<rect x="1077" y="522" width="48" height="1" fill="#c00000"/>

<rect x="5.5" y="3.5" width="11" height="10" rx="2" fill="none" stroke="#808080" stroke-width="1.4" shape-rendering="auto"/>
<rect x="12" y="5.5" width="3" height="6.5" fill="#a0a0a0"/>
<rect x="1060.5" y="24.5" width="11" height="10" rx="2" fill="none" stroke="#808080" stroke-width="1.4" shape-rendering="auto"/>
<rect x="1067" y="26.5" width="3" height="6.5" fill="#a0a0a0"/>
<path d="M1047.5 24.5 L1052.5 29.5 L1047.5 34.5 L1042.5 29.5 Z" fill="none" stroke="#909090" stroke-width="1" shape-rendering="auto"/>
<circle cx="122" cy="29" r="6" fill="#888888" shape-rendering="auto"/>
<path d="M119 27.7 L122 30.7 L125 27.7" fill="none" stroke="#101010" stroke-width="1.1" shape-rendering="auto"/>
<circle cx="8" cy="405" r="6" fill="#888888" shape-rendering="auto"/>
<path d="M5 403.7 L8 406.7 L11 403.7" fill="none" stroke="#101010" stroke-width="1.1" shape-rendering="auto"/>

<g shape-rendering="auto">
<text transform="translate(28 13.7) scale(1 1.06)" class="tb" >分时</text>
<text transform="translate(62 13.7) scale(1 1.06)" class="tb" ><tspan class="la">1</tspan>分钟</text>
<text transform="translate(101 13.7) scale(1 1.06)" class="tb" ><tspan class="la">5</tspan>分钟</text>
<text transform="translate(139 13.7) scale(1 1.06)" class="tb" ><tspan class="la">15</tspan>分钟</text>
<text transform="translate(185.5 13.7) scale(1 1.06)" class="tb" ><tspan class="la">30</tspan>分钟</text>
<text transform="translate(231 13.7) scale(1 1.06)" class="tb" ><tspan class="la">60</tspan>分钟</text>
<text transform="translate(278 13.7) scale(1 1.06)" class="tb cy" >日线</text>
<text transform="translate(312.5 13.7) scale(1 1.06)" class="tb" >周线</text>
<text transform="translate(345.5 13.7) scale(1 1.06)" class="tb" >月线</text>
<text transform="translate(378.5 13.7) scale(1 1.06)" class="tb" >多周期</text>
<text transform="translate(422.5 13.7) scale(1 1.06)" class="tb" >更多</text>
<text transform="translate(450.3,15) scale(0.78,1.35)" x="0" y="0" class="tb">&gt;</text>
<text transform="translate(816 13.7) scale(1 1.06)" class="tb" >复权</text>
<text transform="translate(850 13.7) scale(1 1.06)" class="tb" >叠加</text>
<text transform="translate(885 13.7) scale(1 1.06)" class="tb" >多股</text>
<text transform="translate(919 13.7) scale(1 1.06)" class="tb" >统计</text>
<text transform="translate(954 13.7) scale(1 1.06)" class="tb" >画线</text>
<text transform="translate(992 13.7) scale(1 1.06)" class="tb" ><tspan class="la">F10</tspan></text>
<text transform="translate(1024.5 13.7) scale(1 1.06)" class="tb" >标记</text>
<text transform="translate(1057.5 13.7) scale(1 1.06)" class="tb" ><tspan style="letter-spacing:-1.5px">+</tspan>自选</text>
<text transform="translate(1095 13.7) scale(1 1.06)" class="tb" >返回</text>
<text transform="translate(3 33.8) scale(1 1.06)" class="tb" >海洋王<tspan class="la">(</tspan>日线<tspan class="la">.</tspan>前复权<tspan class="la">)</tspan></text>
<text x="18" y="410" class="tl" >股朋指标网</text>
<text x="83" y="410" class="tl"  style="fill:#ffff00">个股资金线<tspan class="la">: 98.73</tspan></text>
<text x="184.5" y="410" class="tl"  style="fill:#ff80ff">个股资金生命线<tspan class="la">: 96.41</tspan></text>
<text x="311" y="410" class="tl"  style="fill:#ff00ff"><tspan class="la">K: 77.18</tspan></text>
<text x="361.5" y="410" class="tl"  style="fill:#00ff00"><tspan class="la">D: 69.21</tspan></text>
<text x="1120" y="45" class="ax"  text-anchor="end">9.50</text>
<text x="1120" y="71" class="ax"  text-anchor="end">9.25</text>
<text x="1120" y="96" class="ax"  text-anchor="end">9.00</text>
<text x="1120" y="122" class="ax"  text-anchor="end">8.75</text>
<text x="1120" y="147" class="ax"  text-anchor="end">8.50</text>
<text x="1120" y="173" class="ax"  text-anchor="end">8.25</text>
<text x="1120" y="199" class="ax"  text-anchor="end">8.00</text>
<text x="1120" y="224" class="ax"  text-anchor="end">7.75</text>
<text x="1120" y="250" class="ax"  text-anchor="end">7.50</text>
<text x="1120" y="275" class="ax"  text-anchor="end">7.25</text>
<text x="1120" y="301" class="ax"  text-anchor="end">7.00</text>
<text x="1120" y="327" class="ax"  text-anchor="end">6.75</text>
<text x="1120" y="352" class="ax"  text-anchor="end">6.50</text>
<text x="1120" y="443" class="ax"  text-anchor="end">120.0</text>
<text x="1120" y="477" class="ax"  text-anchor="end">100.0</text>
<text x="1120" y="511" class="ax"  text-anchor="end">80.00</text>
<text x="1120" y="545" class="ax"  text-anchor="end">60.00</text>
<text x="1120" y="579" class="ax"  text-anchor="end">40.00</text>
<rect x="1077" y="508" width="48" height="14" fill="#000080"/>
<text x="1077" y="520" class="ax"  style="fill:#e8e8e8">70.10</text>
<text x="3" y="643" class="ax" >2025年</text>
<text x="69" y="643" class="ax" >6</text>
<text x="200" y="643" class="ax" >7</text>
<text x="351" y="643" class="ax" >8</text>
<text x="488" y="643" class="ax" >9</text>
<text x="633" y="643" class="ax" >10</text>
<text x="744" y="643" class="ax" >11</text>
<text x="876" y="643" class="ax" >12</text>
<text x="1062.5" y="621" class="wm1"  text-anchor="middle">股朋指标网</text>
<text x="1057.6" y="639" class="wm2"  text-anchor="middle">www.7gpzb.com</text>
</g>
</svg>
</body></html>
